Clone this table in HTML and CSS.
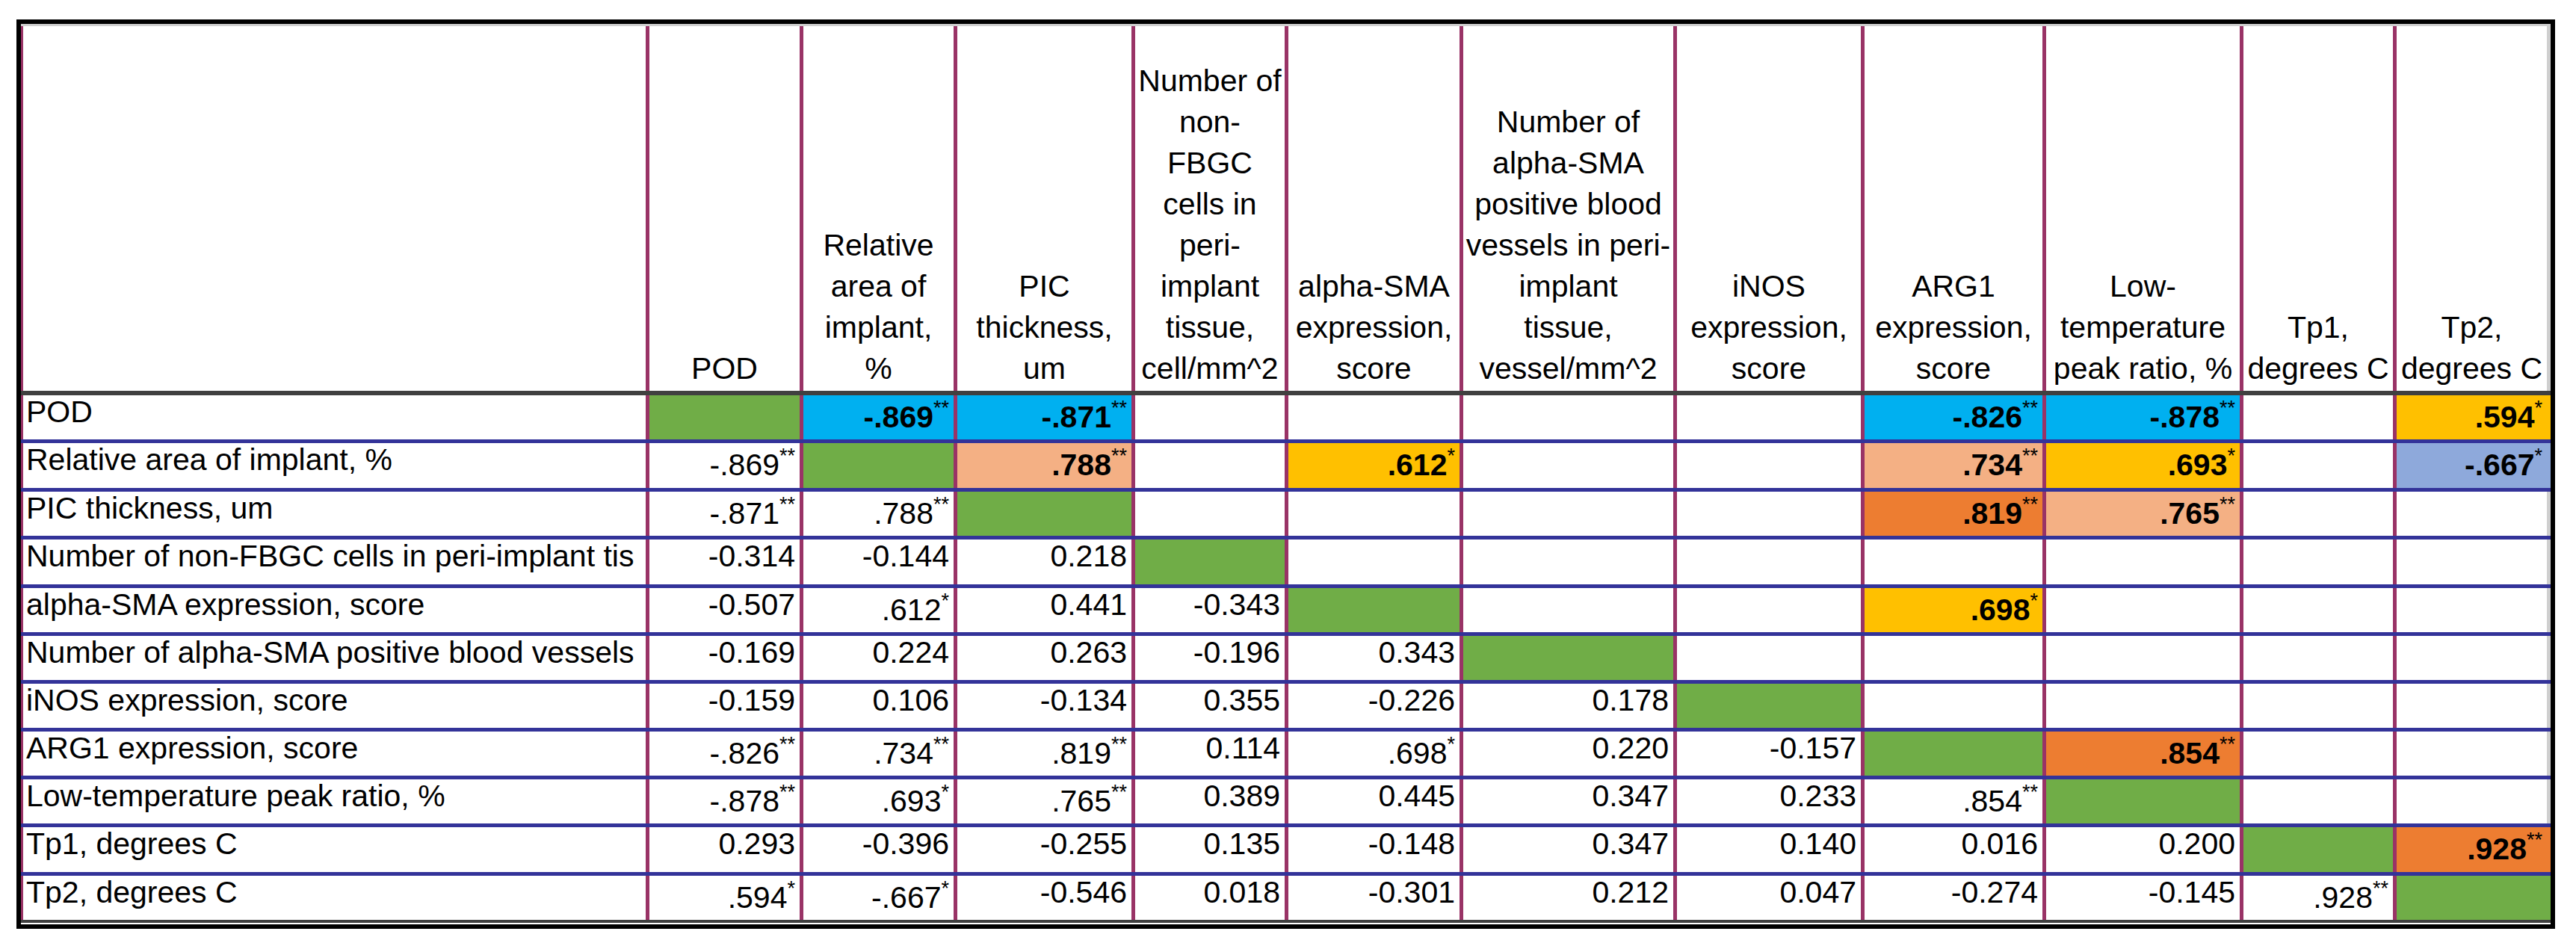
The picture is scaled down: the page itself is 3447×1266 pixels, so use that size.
FILE: index.html
```html
<!DOCTYPE html>
<html lang="en">
<head>
<meta charset="utf-8">
<title>Correlation matrix</title>
<link rel="stylesheet" href="styles.css">
</head>
<body>
<div class="frame" role="table">
  <div class="row head" role="row">
    <div class="cell hd"></div>
    <div class="cell hd"><span class="ht">POD</span></div>
    <div class="cell hd"><span class="ht">Relative<br>area of<br>implant,<br>%</span></div>
    <div class="cell hd"><span class="ht">PIC<br>thickness,<br>um</span></div>
    <div class="cell hd"><span class="ht">Number of<br>non-<br>FBGC<br>cells in<br>peri-<br>implant<br>tissue,<br>cell/mm^2</span></div>
    <div class="cell hd"><span class="ht">alpha-SMA<br>expression,<br>score</span></div>
    <div class="cell hd"><span class="ht">Number of<br>alpha-SMA<br>positive blood<br>vessels in peri-<br>implant<br>tissue,<br>vessel/mm^2</span></div>
    <div class="cell hd"><span class="ht">iNOS<br>expression,<br>score</span></div>
    <div class="cell hd"><span class="ht">ARG1<br>expression,<br>score</span></div>
    <div class="cell hd"><span class="ht">Low-<br>temperature<br>peak ratio, %</span></div>
    <div class="cell hd"><span class="ht">Tp1,<br>degrees C</span></div>
    <div class="cell hd"><span class="ht">Tp2,<br>degrees C</span></div>
  </div>

  <div class="row" role="row">
    <div class="cell lbl">POD</div>
    <div class="cell fill g"></div>
    <div class="cell n fill b">-.869<sup>**</sup></div>
    <div class="cell n fill b">-.871<sup>**</sup></div>
    <div class="cell n"></div>
    <div class="cell n"></div>
    <div class="cell n"></div>
    <div class="cell n"></div>
    <div class="cell n fill b">-.826<sup>**</sup></div>
    <div class="cell n fill b">-.878<sup>**</sup></div>
    <div class="cell n"></div>
    <div class="cell n fill y">.594<sup>*</sup></div>
  </div>

  <div class="row tall" role="row">
    <div class="cell lbl">Relative area of implant, %</div>
    <div class="cell n">-.869<sup>**</sup></div>
    <div class="cell fill g"></div>
    <div class="cell n fill p">.788<sup>**</sup></div>
    <div class="cell n"></div>
    <div class="cell n fill y">.612<sup>*</sup></div>
    <div class="cell n"></div>
    <div class="cell n"></div>
    <div class="cell n fill p">.734<sup>**</sup></div>
    <div class="cell n fill y">.693<sup>*</sup></div>
    <div class="cell n"></div>
    <div class="cell n fill l">-.667<sup>*</sup></div>
  </div>

  <div class="row" role="row">
    <div class="cell lbl">PIC thickness, um</div>
    <div class="cell n">-.871<sup>**</sup></div>
    <div class="cell n">.788<sup>**</sup></div>
    <div class="cell fill g"></div>
    <div class="cell n"></div>
    <div class="cell n"></div>
    <div class="cell n"></div>
    <div class="cell n"></div>
    <div class="cell n fill o">.819<sup>**</sup></div>
    <div class="cell n fill p">.765<sup>**</sup></div>
    <div class="cell n"></div>
    <div class="cell n"></div>
  </div>

  <div class="row tall" role="row">
    <div class="cell lbl">Number of non-FBGC cells in peri-implant tis</div>
    <div class="cell n">-0.314</div>
    <div class="cell n">-0.144</div>
    <div class="cell n">0.218</div>
    <div class="cell fill g"></div>
    <div class="cell n"></div>
    <div class="cell n"></div>
    <div class="cell n"></div>
    <div class="cell n"></div>
    <div class="cell n"></div>
    <div class="cell n"></div>
    <div class="cell n"></div>
  </div>

  <div class="row" role="row">
    <div class="cell lbl">alpha-SMA expression, score</div>
    <div class="cell n">-0.507</div>
    <div class="cell n">.612<sup>*</sup></div>
    <div class="cell n">0.441</div>
    <div class="cell n">-0.343</div>
    <div class="cell fill g"></div>
    <div class="cell n"></div>
    <div class="cell n"></div>
    <div class="cell n fill y">.698<sup>*</sup></div>
    <div class="cell n"></div>
    <div class="cell n"></div>
    <div class="cell n"></div>
  </div>

  <div class="row" role="row">
    <div class="cell lbl">Number of alpha-SMA positive blood vessels</div>
    <div class="cell n">-0.169</div>
    <div class="cell n">0.224</div>
    <div class="cell n">0.263</div>
    <div class="cell n">-0.196</div>
    <div class="cell n">0.343</div>
    <div class="cell fill g"></div>
    <div class="cell n"></div>
    <div class="cell n"></div>
    <div class="cell n"></div>
    <div class="cell n"></div>
    <div class="cell n"></div>
  </div>

  <div class="row" role="row">
    <div class="cell lbl">iNOS expression, score</div>
    <div class="cell n">-0.159</div>
    <div class="cell n">0.106</div>
    <div class="cell n">-0.134</div>
    <div class="cell n">0.355</div>
    <div class="cell n">-0.226</div>
    <div class="cell n">0.178</div>
    <div class="cell fill g"></div>
    <div class="cell n"></div>
    <div class="cell n"></div>
    <div class="cell n"></div>
    <div class="cell n"></div>
  </div>

  <div class="row" role="row">
    <div class="cell lbl">ARG1 expression, score</div>
    <div class="cell n">-.826<sup>**</sup></div>
    <div class="cell n">.734<sup>**</sup></div>
    <div class="cell n">.819<sup>**</sup></div>
    <div class="cell n">0.114</div>
    <div class="cell n">.698<sup>*</sup></div>
    <div class="cell n">0.220</div>
    <div class="cell n">-0.157</div>
    <div class="cell fill g"></div>
    <div class="cell n fill o">.854<sup>**</sup></div>
    <div class="cell n"></div>
    <div class="cell n"></div>
  </div>

  <div class="row" role="row">
    <div class="cell lbl">Low-temperature peak ratio, %</div>
    <div class="cell n">-.878<sup>**</sup></div>
    <div class="cell n">.693<sup>*</sup></div>
    <div class="cell n">.765<sup>**</sup></div>
    <div class="cell n">0.389</div>
    <div class="cell n">0.445</div>
    <div class="cell n">0.347</div>
    <div class="cell n">0.233</div>
    <div class="cell n">.854<sup>**</sup></div>
    <div class="cell fill g"></div>
    <div class="cell n"></div>
    <div class="cell n"></div>
  </div>

  <div class="row tall" role="row">
    <div class="cell lbl">Tp1, degrees C</div>
    <div class="cell n">0.293</div>
    <div class="cell n">-0.396</div>
    <div class="cell n">-0.255</div>
    <div class="cell n">0.135</div>
    <div class="cell n">-0.148</div>
    <div class="cell n">0.347</div>
    <div class="cell n">0.140</div>
    <div class="cell n">0.016</div>
    <div class="cell n">0.200</div>
    <div class="cell fill g"></div>
    <div class="cell n fill o">.928<sup>**</sup></div>
  </div>

  <div class="row last" role="row">
    <div class="cell lbl">Tp2, degrees C</div>
    <div class="cell n">.594<sup>*</sup></div>
    <div class="cell n">-.667<sup>*</sup></div>
    <div class="cell n">-0.546</div>
    <div class="cell n">0.018</div>
    <div class="cell n">-0.301</div>
    <div class="cell n">0.212</div>
    <div class="cell n">0.047</div>
    <div class="cell n">-0.274</div>
    <div class="cell n">-0.145</div>
    <div class="cell n">.928<sup>**</sup></div>
    <div class="cell fill g"></div>
  </div>
</div>
</body>
</html>
```

FILE: styles.css
```css
* {
  box-sizing: border-box;
}

body {
  margin: 0;
  background: #ffffff;
  color: #000000;
  font-family: "Liberation Sans", Arial, sans-serif;
}

.frame {
  width: 3397px;
  margin: 26px 0 0 22px;
  border: 6px solid #000000;
  padding-bottom: 2px;
  background: #ffffff;
}

.row {
  display: grid;
  grid-template-columns: 841px 206px 206px 238px 205px 234px 286px 251px 243px 264px 205px 206px;
  height: 64px;
  border-bottom: 5px solid #333399;
}

.row.tall {
  height: 65px;
}

.row.head {
  height: 497px;
  border-top: 3px solid #cfcfcf;
  border-bottom: 6px solid #404040;
}

.row.last {
  height: 63px;
  border-bottom: 4px solid #404040;
}

.cell {
  border-right: 5px solid #993366;
  font-size: 41px;
  line-height: 44px;
  white-space: nowrap;
  overflow: hidden;
}

.cell:first-child {
  border-left: 3px solid #993366;
}

.cell:last-child {
  border-right-color: #cfcfcf;
}

.cell.fill:last-child {
  border-right-color: transparent;
}

.hd {
  display: flex;
  align-items: flex-end;
  justify-content: center;
  padding-bottom: 2px;
  line-height: 55px;
  text-align: center;
}

.ht {
  display: block;
}

.lbl {
  padding-left: 4px;
}

.n {
  text-align: right;
  padding-right: 6px;
}

.fill {
  font-weight: bold;
}

.g { background: #70ad47; }
.b { background: #00b0f0; }
.p { background: #f4b084; }
.y { background: #ffc000; }
.o { background: #ed7d31; }
.l { background: #8ea9db; }

sup {
  font-size: 27px;
  line-height: 35px;
  vertical-align: 17px;
  font-weight: normal;
}
```
